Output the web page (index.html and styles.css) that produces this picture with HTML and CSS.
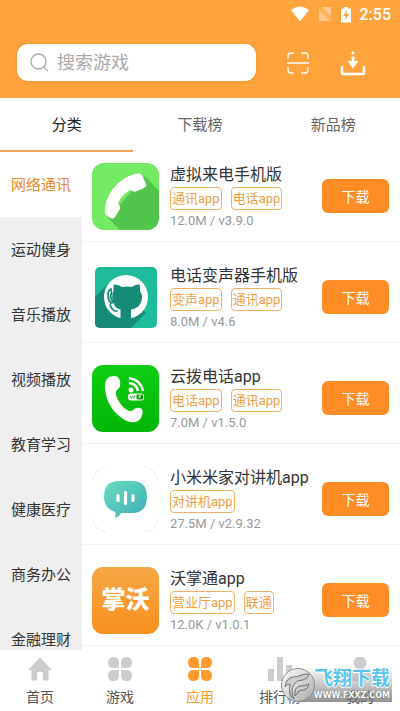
FILE: index.html
```html
<!DOCTYPE html>
<html lang="zh-CN">
<head>
<meta charset="utf-8">
<meta name="viewport" content="width=device-width, initial-scale=1">
<title>应用分类</title>
<link rel="stylesheet" href="styles.css">
</head>
<body>
<header class="header">
  <div class="status">
    <svg width="20" height="16" viewBox="0 0 20 16"><path d="M1 4Q10-3 19 4L10 15.500Z" fill="#fff"/></svg>
    <svg class="dim" width="14" height="16" viewBox="0 0 14 16"><path d="M5 1h8v10L4 2zM1 4l11 11H1z" fill="#fff"/><path d="M0 1l14 14" stroke="#fff"/></svg>
    <svg width="12" height="17" viewBox="0 0 12 17"><path d="M1 2.500h3V1h4v1.500h3V16.500H1z" fill="#fff"/><path d="M7 4L3 10h2.500v4L9 8H6.500z" fill="#ffa33c"/></svg>
    <time>2:55</time>
  </div>
  <div class="tools">
    <label class="search">
      <svg width="19" height="19" viewBox="0 0 19 19" fill="none" stroke="#aaa" stroke-width="1.300"><circle cx="8.500" cy="8.500" r="7.500"/><path d="M14 14l4 4"/></svg>
      <input type="search" placeholder="搜索游戏" aria-label="搜索游戏">
    </label>
    <button class="tool" aria-label="扫一扫"><svg width="24" height="24" viewBox="0 0 24 24" fill="none" stroke="#fff" stroke-width="1.300"><path d="M2 8V5q0-3 3-3h3M15 2h4q3 0 3 3v3M22 16v3q0 3-3 3h-4M8 22H5q-3 0-3-3v-3M1 12h22"/></svg></button>
    <button class="tool" aria-label="下载管理"><svg width="26" height="26" viewBox="0 0 26 26"><path d="M2 17v6q0 1 1 1h20q1 0 1-1v-6" fill="none" stroke="#fff" stroke-width="2.600" stroke-linecap="round"/><path d="M11.500 6.500h3V11h4L13 18.500 7.500 11h4z" fill="#fff"/><circle cx="13" cy="3" r="1.600" fill="#fff"/></svg></button>
  </div>
</header>
<nav class="tabs">
  <a class="tab active" href="#cat">分类</a>
  <a class="tab" href="#top">下载榜</a>
  <a class="tab" href="#new">新品榜</a>
</nav>
<main class="main">
  <nav class="side">
    <a class="active" href="#1">网络通讯</a>
    <a href="#2">运动健身</a>
    <a href="#3">音乐播放</a>
    <a href="#4">视频播放</a>
    <a href="#5">教育学习</a>
    <a href="#6">健康医疗</a>
    <a href="#7">商务办公</a>
    <a href="#8">金融理财</a>
  </nav>
  <ul class="list">
    <li class="row">
      <svg class="icon" viewBox="0 0 67 67"><defs><clipPath id="r"><rect width="67" height="67" rx="12"/></clipPath></defs><g clip-path="url(#r)"><path fill="#74e963" d="M0 0h67v67H0z"/><path fill="#50c44c" d="M53 13L67 28v39H28L16 55z"/></g><path fill="#fff" d="M13 47C14 29 29 13 46 10.500q3-.500 4 2l4 8q1 3-2 4.500l-8 3.500q-3 1-5-1.500c-6 2-11 8-13 14q3 2 2 5l-5 8q-2 3-5 1l-4-3.500q-2-2-1-4.500z"/></svg>
      <div class="info"><h2>虚拟来电手机版</h2><p class="tags"><span>通讯app</span><span>电话app</span></p><p class="meta">12.0M / v3.9.0</p></div>
      <button class="get">下载</button>
    </li>
    <li class="row">
      <svg class="icon" viewBox="0 0 67 67"><defs><clipPath id="g"><rect x="3" y="3" width="62" height="61" rx="5"/></clipPath></defs><g clip-path="url(#g)"><path fill="#1fbc9c" d="M0 0h67v67H0z"/><path fill="#168c78" d="M18 18L0 36v31h36l18-18z"/><circle cx="34" cy="33" r="22" fill="#fff"/><path fill="#168c78" d="M22 20.500q4-.500 8 2.500 5-1 9.500 0 4-3 8-2.500 1 4 .5 6.500 3 4 1.500 10-2 7-10.500 8.500V58H28.500V45.500Q22 44 20.500 36.500 19.500 31 21.500 27q-.500-3 .5-6.500z"/></g><path fill="none" stroke="#168c78" stroke-width="1.800" stroke-linecap="round" d="M19 25q-3 1-3 6t3 8q2 0 1.500-2-3-4-1-8zM18 41q3 7 7 6"/></svg>
      <div class="info"><h2>电话变声器手机版</h2><p class="tags"><span>变声app</span><span>通讯app</span></p><p class="meta">8.0M / v4.6</p></div>
      <button class="get">下载</button>
    </li>
    <li class="row">
      <svg class="icon" viewBox="0 0 67 67"><defs><linearGradient id="v" x2="0" y2="1"><stop stop-color="#0fce12"/><stop offset="1" stop-color="#02b607"/></linearGradient></defs><rect width="67" height="67" rx="11" fill="url(#v)"/><path fill="#fff" d="M13 21c0-7 4-10 9-10s7 5 6 10c-1 4-5 3-4 9 2 7 8 14 13 16 5 1 5-4 10-3 5 0 4 6 2 10-3 5-9 5-14 3C24 51 13 38 13 21z"/><path fill="none" stroke="#fff" stroke-width="2.500" d="M37 13q12 2 14 13M37 18q8 1 9 8"/><circle cx="39" cy="25" r="2.500" fill="#fff"/><rect x="36" y="28.500" width="16" height="7" rx="3" fill="#fff"/><path d="M38 31l1.500 2.500L41 31m1 2.500V31h1.500" fill="none" stroke="#079d0a" stroke-width=".8"/><rect x="44.500" y="29.500" width="6.500" height="5" rx="1" fill="#079d0a"/><path d="M47 33.500v-3h2m-2 1.500h2" fill="none" stroke="#fff" stroke-width=".7"/></svg>
      <div class="info"><h2>云拨电话app</h2><p class="tags"><span>电话app</span><span>通讯app</span></p><p class="meta">7.0M / v1.5.0</p></div>
      <button class="get">下载</button>
    </li>
    <li class="row">
      <svg class="icon" viewBox="0 0 67 67"><defs><linearGradient id="m" x2="1" y2="1"><stop stop-color="#68dcc0"/><stop offset="1" stop-color="#3faeb5"/></linearGradient></defs><path d="M1 14Q3 3 14 1M53 1q11 2 13 13M66 53q-2 11-13 13M14 66Q3 64 1 53" fill="none" stroke="#eee"/><path fill="url(#m)" d="M12 31q0-16 15-16h13q15 0 15 16T40 47H29q-2 4-6 5 1-3 0-6-11-4-11-15z"/><path d="M26 29.500v5M33.500 26.500v11M41 29.500v5" stroke="#fff" stroke-width="3.200" stroke-linecap="round"/></svg>
      <div class="info"><h2>小米米家对讲机app</h2><p class="tags"><span>对讲机app</span></p><p class="meta">27.5M / v2.9.32</p></div>
      <button class="get">下载</button>
    </li>
    <li class="row">
      <div class="icon wo">掌沃</div>
      <div class="info"><h2>沃掌通app</h2><p class="tags"><span>营业厅app</span><span>联通</span></p><p class="meta">12.0K / v1.0.1</p></div>
      <button class="get">下载</button>
    </li>
  </ul>
</main>
<nav class="bottom">
  <a href="#home"><svg width="24" height="24" viewBox="0 0 24 24"><path d="M12 0.500L24 13h-3.500v9.500q0 1-1 1H15V16q0-1-1-1h-4q-1 0-1 1v7.500H4.500q-1 0-1-1V13H0z"/></svg>首页</a>
  <a href="#game"><svg width="24" height="24" viewBox="0 0 24 24"><path d="M5.500 0Q11 0 11 5.500V11H5.500Q0 11 0 5.500T5.500 0zM18.500 0Q24 0 24 5.500T18.500 11H13V5.500Q13 0 18.500 0zM5.500 13H11v5.500q0 5.500-5.500 5.500T0 18.500 5.500 13zM13 13h5.500q5.500 0 5.500 5.500T18.500 24 13 18.500z"/></svg>游戏</a>
  <a class="active" href="#app"><svg width="24" height="24" viewBox="0 0 24 24"><path d="M5.500 0Q11 0 11 5.500V11H5.500Q0 11 0 5.500T5.500 0zM18.500 0Q24 0 24 5.500T18.500 11H13V5.500Q13 0 18.500 0zM5.500 13H11v5.500q0 5.500-5.500 5.500T0 18.500 5.500 13zM13 13h5.500q5.500 0 5.500 5.500T18.500 24 13 18.500z"/></svg>应用</a>
  <a href="#rank"><svg width="24" height="24" viewBox="0 0 24 24"><path d="M0 12h6v12H0zM9 0h6v24H9zM18 8h6v16h-6z"/></svg>排行榜</a>
  <a href="#me"><svg width="24" height="24" viewBox="0 0 24 24"><circle cx="12" cy="6" r="6.500"/><path d="M0 24q0-10 8-10h8q8 0 8 10z"/></svg>我的</a>
  <div class="mark">
    <svg width="36" height="36" viewBox="0 0 36 36"><defs><linearGradient id="s" x2="1" y2="1"><stop stop-color="#fff"/><stop offset="1" stop-color="#aaa"/></linearGradient></defs><circle cx="18" cy="18" r="16.500" fill="url(#s)" stroke="#888"/><path d="M5 20Q6 11 13 10q5 0 9-2 4-1 7-1-1 5-6 6-6 0-8 3-3 3-3 8 0 4 2 8-6-3-4-15-3 0-5 3z" fill="#ccc" stroke="#666"/><path d="M15 29q-1-9 5-10 5 0 9-2-1 5-5 6-5 0-6 2-1 2-3 4z" fill="#ccc" stroke="#666"/></svg>
    <div class="words"><b>飞翔下载</b><span>WWW.FXXZ.COM</span></div>
  </div>
</nav>
</body>
</html>
```

FILE: styles.css
```css
* { box-sizing: border-box; margin: 0; padding: 0; }
body {
  display: flex;
  flex-direction: column;
  height: 100vh;
  overflow: hidden;
  background: #fff;
  color: #333;
  font-family: Roboto, "Noto Sans CJK SC", sans-serif;
}
a { color: inherit; text-decoration: none; }
button { border: 0; background: none; font: inherit; }
.header { background: #ffa33c; padding-bottom: 17px; }
.status {
  display: flex;
  align-items: center;
  justify-content: flex-end;
  gap: 8px;
  height: 28px;
  padding: 0 9px;
  color: #fff;
  font-size: 16px;
  font-weight: 500;
}
.dim { opacity: .4; }
.tools { display: flex; align-items: center; padding: 16px 34px 0 17px; }
.search {
  display: flex;
  flex: 1;
  align-items: center;
  gap: 8px;
  height: 37px;
  margin-right: 30px;
  padding: 0 13px;
  border-radius: 11px;
  background: #fff;
  box-shadow: 0 0 3px #c87c2880;
}
.search svg { flex: none; }
.search input {
  width: 100%;
  min-width: 0;
  border: 0;
  outline: 0;
  background: none;
  font: inherit;
  font-size: 18px;
}
.search input::placeholder { color: #aaa; }
.tool { display: flex; }
.tool + .tool { margin-left: 30px; }
.tabs { display: flex; font-size: 15px; color: #666; }
.tab { flex: 1; padding-top: 2px; line-height: 50px; text-align: center; border-bottom: 2px solid transparent; }
.tab.active { color: #222; border-color: #eba653; }
.main { display: flex; flex: 1; min-height: 0; overflow: hidden; }
.side { flex: none; width: 82px; background: #efefef; font-size: 15px; }
.side a { display: block; padding-top: 2px; line-height: 63px; text-align: center; }
.side .active { background: #fff; color: #e8892b; }
.list { flex: 1; min-width: 0; list-style: none; }
.row { display: flex; padding: 22px 11px 9px 10px; border-bottom: 1px solid #f3f3f3; }
.row:first-child { padding-top: 11px; }
.icon { flex: none; width: 67px; height: 67px; margin-right: 11px; }
.wo {
  border-radius: 11px;
  background: linear-gradient(#f8a746, #f6901d);
  color: #fff;
  font-size: 24px;
  font-weight: 900;
  line-height: 66px;
  text-align: center;
}
.info { flex: 1; min-width: 0; white-space: nowrap; }
.info h2 { font-size: 16px; font-weight: 400; line-height: 24px; }
.tags { display: flex; gap: 9px; }
.tags span {
  padding: 0 1px;
  border: 1px solid #f3b163;
  border-radius: 4px;
  color: #efa045;
  font-size: 13px;
  line-height: 21px;
}
.meta { color: #999; font-size: 13px; line-height: 22px; }
.get {
  flex: none;
  width: 67px;
  height: 34px;
  margin-top: 16px;
  border-radius: 6px;
  background: #ff8c24;
  color: #fff;
  font-size: 14px;
}
.bottom { position: relative; display: flex; height: 61px; padding-top: 7px; background: #fff; font-size: 14px; }
.bottom a { display: flex; flex: 1; flex-direction: column; align-items: center; gap: 6px; line-height: 20px; color: #555; }
.bottom svg { fill: #ccc; }
.bottom .active { color: #ff9a2e; }
.bottom .active svg { fill: #ff9a2e; }
.mark { position: absolute; right: 8px; bottom: 8px; display: flex; align-items: center; }
.words {
  display: flex;
  flex-direction: column;
  align-items: center;
  margin-left: -18px;
  padding: 0 2px 0 16px;
  background: linear-gradient(#eee6, #777c);
  color: #fff;
}
.mark svg { z-index: 1; opacity: .9; }
.words b {
  color: #5bc4ee;
  font-size: 19px;
  line-height: 22px;
  text-shadow: 1px 0 #fff, -1px 0 #fff, 0 1px #fff, 0 -1px #fff;
}
.words span { font: bold 8px/12px "DejaVu Sans", sans-serif; text-shadow: 0 0 1px #444; }
```
